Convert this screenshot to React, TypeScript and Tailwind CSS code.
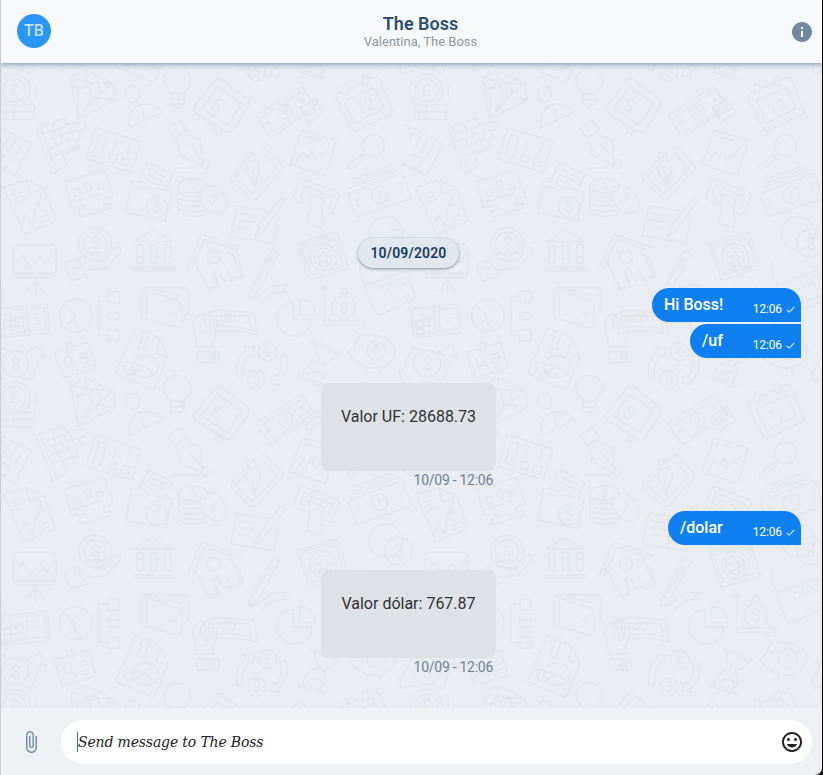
import React from "react";
import { MdAttachFile, MdCheck, MdInfo, MdInsertEmoticon } from "react-icons/md";

function Glyph({ x, y, size = 50, rotate = 0, children }: { x: number; y: number; size?: number; rotate?: number; children: string }) {
  return (
    <text x={x} y={y} fontSize={size} textAnchor="middle" dominantBaseline="central" transform={`rotate(${rotate} ${x} ${y})`} fill="#e3e7ec" stroke="none" fontFamily="Roboto, sans-serif">
      {children}
    </text>
  );
}

// One repeat of the finance doodles, split in four quadrants drawn at 3x.
function Doodles() {
  return (
    <g id="doodles" fill="none" stroke="#e3e7eb" strokeWidth="5" strokeLinejoin="round" strokeLinecap="round">
      <g transform="translate(0 65) scale(.3333)">
        <circle cx="40" cy="76" r="48" /><circle cx="40" cy="76" r="35" /><Glyph x={40} y={76}>£</Glyph>
        <path d="M5 120H100V163H5ZM18 120V163M40 120V163M5 140H100M106 60V98" />
        <path d="M210 38L255 15L338 58L344 105L230 163ZM210 38L255 48L338 58M255 15V48L232 75L230 163L275 95L344 105M210 55L232 75L290 50L300 85L330 60M275 95L255 48M300 85L250 140" />
        <ellipse cx="396" cy="87" rx="21" ry="25" transform="rotate(-15 396 87)" />
        <path d="M383 190Q380 130 420 118Q460 112 487 140ZM420 118L432 165" />
        <path d="M514 85Q490 70 490 45A40 36 0 0 1 570 45Q570 70 545 85ZM511 88H550V118H511ZM511 103H550M518 118L530 130L542 118" />
        <path d="M106 190L190 160L198 180L250 168L257 187L233 200L245 220L225 228L233 250L185 270L198 300L155 327ZM118 186L168 320M135 205L190 185M140 225L250 190M148 248L238 214M158 272L228 246M155 180L165 205M175 198L185 225M160 225L170 248M210 190L218 210M200 220L208 240M180 255L187 275" />
        <path d="M285 187L420 230L392 322L256 281ZM295 208L318 214L300 278L276 270ZM348 222L338 252M389 234L379 264M328 267L350 272L344 294L322 288ZM366 279L388 284L382 305L360 298Z" />
        <path d="M502 190L538 165L560 195L522 220ZM524 220L540 255L535 268L605 303L600 225L588 220L560 208M566 238L610 290M518 309H595" /><circle cx="615" cy="297" r="13" />
        <path d="M-20 180L90 235L43 333L-30 296M0 205L-10 225M25 215L5 250M45 225L25 260M62 240L42 275M0 268L28 282L15 310L-10 300" />
        <path d="M8 367L75 345L130 370L165 468L70 507ZM75 345L88 388L130 370M32 390L60 380M36 402L65 391M42 414L72 402M65 475L75 448L95 485L108 415L115 425L120 385M115 460L140 450M120 473L145 462" />
        <path d="M192 350L310 315L338 393L308 405L311 420L330 415L333 428L240 457L234 440L255 432L250 422L212 430ZM220 375L235 370L240 390L225 395ZM252 352L266 348L273 375L259 380ZM290 360L303 356L307 370L294 374ZM205 415L300 385" />
        <path d="M392 348L376 443L495 468L515 380L440 365L430 352ZM400 365L435 372M412 350L443 292L518 330L494 375M448 314L495 337M441 328L488 351M434 342L478 363" /><circle cx="469" cy="427" r="31" /><Glyph x={469} y={427} size={48}>$</Glyph>
        <ellipse cx="577" cy="363" rx="44" ry="22" /><Glyph x={577} y={363} size={32}>$</Glyph>
        <path d="M533 363V440Q550 458 590 453Q605 455 620 443M533 382Q560 400 600 391M533 398Q560 415 605 407M533 414Q560 430 610 421M533 430Q560 446 615 436" />
        <ellipse cx="638" cy="403" rx="48" ry="34" transform="rotate(50 638 403)" /><Glyph x={638} y={403} size={38} rotate={30}>$</Glyph>
        <circle cx="283" cy="537" r="49" /><circle cx="283" cy="537" r="35" /><Glyph x={283} y={537}>$</Glyph>
        <path d="M50 539H150Q165 541 165 556V620Q165 637 150 637H50Q37 637 37 620V556Q37 540 50 539ZM37 625H165M48 590L65 570L88 610L118 575L137 598L158 565M104 640V690M104 650L75 680M104 650L130 680" />
        <path d="M190 598L230 578L258 635L210 648ZM240 573L270 563H325L350 545Q365 550 360 562L315 610L258 615M280 590H310L330 570" /><circle cx="227" cy="600" r="10" />
        <path d="M400 530L458 496L516 530ZM408 540H426V595H408ZM450 540H468V595H450ZM492 540H510V595H492ZM397 607H522V616H397Z" />
        <path d="M560 610L603 508L725 550M575 610L612 522L710 557M592 610L628 677L655 665L640 615M680 615L695 650L730 635L715 585L680 560" /><circle cx="640" cy="575" r="20" />
      </g>
      <g transform="translate(205 65) scale(.3333)">
        <path d="M30 43Q40 36 50 45L128 103Q135 112 130 122L85 195Q75 205 63 200L-30 145Q-40 135 -34 125L25 50ZM35 65L108 115L66 180L-10 130ZM25 198L38 185L50 200L40 210Z" /><Glyph x={35} y={120} size={55} rotate={35}>S</Glyph>
        <path d="M152 152L290 65L332 128L195 218ZM165 160L285 82M205 200L315 130M285 130L330 102L355 142L310 175ZM292 143L340 115M300 157L348 128" /><circle cx="241" cy="141" r="22" /><Glyph x={241} y={141} size={34}>$</Glyph><circle cx="190" cy="173" r="5" /><circle cx="291" cy="107" r="5" />
        <path d="M393 100Q390 90 402 85L505 37Q520 35 525 45L562 135Q562 145 553 149L455 197Q445 200 438 190ZM418 108L508 68L537 130L447 175Z" /><ellipse cx="420" cy="73" rx="9" ry="16" fill="#e9edf2" /><ellipse cx="482" cy="47" rx="9" ry="16" fill="#e9edf2" /><Glyph x={480} y={124} size={48} rotate={-22}>12</Glyph>
        <path d="M290 195L394 228L360 333L254 298ZM276 288L295 260L305 282L320 255L328 288L370 250M300 213L350 227" />
        <circle cx="505" cy="241" r="33" /><path d="M478 267L465 278M470 270L426 303Q425 313 435 313L478 282Z" />
        <path d="M165 247Q175 244 183 252L230 300Q235 312 228 318L155 400Q145 406 133 398L80 350Q73 340 80 330L148 260M120 265L145 262L152 285L130 290ZM130 290Q115 315 130 330L148 370L155 335Q175 315 152 285M142 320L147 365M90 335L120 305M95 345L142 388L215 312L175 267" />
        <path d="M282 345Q290 340 300 345L397 382Q404 390 400 398L378 450L350 440M282 345L266 393Q268 405 278 408L305 418M295 360L385 396L370 430M295 360L284 393L300 400M310 385L355 403Q345 450 355 465L348 490L303 472Q320 430 310 385Z" />
        <path d="M428 387L590 324L620 400L455 456ZM433 370L580 315M438 358L570 309M440 345L555 303" /><circle cx="523" cy="390" r="25" /><Glyph x={523} y={390} size={35}>1</Glyph><Glyph x={458} y={414} size={30}>$</Glyph><Glyph x={588} y={369} size={30}>$</Glyph>
        <path d="M95 422L185 438M218 460L206 535L75 513L95 422M225 403Q240 395 240 408L175 498L148 518L158 485ZM105 445L155 454M100 465L145 472M97 485L135 492M150 515L165 488" />
        <path d="M275 535L395 500L430 610L312 645ZM286 550L392 520L415 602L320 630ZM282 542L390 510" /><circle cx="354" cy="577" r="40" /><circle cx="354" cy="577" r="28" /><path d="M354 558L360 572L375 573L363 583L367 597L354 589L341 597L345 583L333 573L348 572Z" />
        <path d="M190 572L205 556L222 568L210 587ZM185 580L205 592L155 690L128 702L138 670ZM138 670L155 690M150 660L195 585M130 703L155 698Q200 650 250 662Q225 670 240 682Q200 675 170 715" />
        <circle cx="543" cy="505" r="50" /><circle cx="580" cy="535" r="42" /><Glyph x={580} y={535} size={55}>$</Glyph>
      </g>
      <g transform="translate(0 255) scale(.3333)">
        <path d="M8 160L130 147Q138 146 139 155L145 225Q145 234 137 235L8 247Q0 247 -1 239L-7 170Q-7 161 8 160ZM77 163L130 157L136 222L82 228ZM28 166L64 162L66 184L30 188ZM8 197L66 190L72 232L10 238ZM8 217L70 211M29 195L32 236M48 192L52 233" /><Glyph x={106} y={192} size={24} rotate={85}>101</Glyph>
        <circle cx="225" cy="182" r="49" /><path d="M190 150L225 185L205 205M218 190L240 230" /><Glyph x={235} y={160} size={22}>3</Glyph>
        <path d="M322 109H356V143H322ZM322 172H354V194H322ZM322 224H355V257H322ZM322 125H295V240H322" />
        <path d="M433 97H550Q564 98 564 113V168Q563 181 552 182M433 97Q423 100 423 115V180Q424 188 436 190L530 218Q543 218 544 203V155Q542 142 530 136L433 103M438 110V182M460 103L540 122M505 173L530 178" />
        <path d="M405 218L480 250L502 308L460 405L344 356ZM480 250L466 295L502 308M415 245L430 230Q450 225 445 240L432 280Q420 290 412 278L425 245" /><ellipse cx="433" cy="335" rx="40" ry="33" /><path d="M433 335L470 360M433 335L370 320Q365 340 385 360ZM433 335L395 350" />
        <path d="M160 292L263 262L286 339L183 370ZM196 268L212 260L220 285L204 290ZM185 360Q185 332 205 332Q225 328 230 345M235 300L258 293M238 312L262 305M242 326L265 319M245 338L270 330" /><ellipse cx="202" cy="317" rx="12" ry="14" />
        <circle cx="43" cy="326" r="40" /><Glyph x={43} y={326} size={55}>$</Glyph><path d="M-5 280L25 285M75 293L117 270L134 313L120 302L90 378L60 366M75 293L92 303" />
        <path d="M590 290H645V323H590ZM590 275L577 215Q575 180 615 175L645 168M590 275H645" /><circle cx="630" cy="307" r="8" /><ellipse cx="620" cy="205" rx="20" ry="30" /><path d="M610 185L620 230M625 180L630 225" />
      </g>
      <g transform="translate(205 255) scale(.3333)">
        <path d="M0 178Q20 160 60 167L145 173L155 240Q100 220 30 230L20 275H-25M25 183L130 182L138 225Q90 210 40 215M0 178V195L38 195L30 230M-22 290H40V322H-22" /><circle cx="20" cy="306" r="7" /><ellipse cx="68" cy="190" rx="22" ry="12" /><Glyph x={68} y={190} size={22}>$</Glyph>
        <path d="M264 140V193H320A53 52 0 1 1 264 140ZM283 132Q325 135 333 180H283Z" />
        <path d="M358 210V98M348 105L358 93L369 105M358 210H478M470 200L482 210L470 220M405 115L416 97L428 115ZM385 175L370 197H462L447 175" /><circle cx="416" cy="158" r="35" /><Glyph x={416} y={158} size={52}>$</Glyph>
        <path d="M480 105Q475 95 488 88L590 50Q605 48 610 60L630 118Q632 130 620 136L525 180Q512 182 507 170ZM465 20Q460 60 480 88M570 138L585 131M597 127L615 118" /><Glyph x={568} y={89} size={33} rotate={-22}>CARD</Glyph>
        <path d="M470 240Q510 235 540 250Q572 265 570 290Q565 325 530 337Q490 345 465 325L445 315L428 292L448 275Q450 250 470 240ZM570 290L580 285M483 340V355M525 340V355M465 240L450 225" /><circle cx="513" cy="287" r="28" /><Glyph x={513} y={287} size={40}>$</Glyph><circle cx="467" cy="270" r="3" />
        <path d="M320 255L406 290L400 297L316 264ZM330 265Q325 290 340 305L345 315Q300 325 292 362M395 295Q385 320 352 325L360 345Q365 370 345 380M276 370L360 398M280 363L363 390M305 360Q330 340 352 360L345 380" />
        <circle cx="187" cy="290" r="28" /><Glyph x={187} y={290} size={46}>€</Glyph><circle cx="154" cy="374" r="27" /><Glyph x={154} y={374} size={44}>$</Glyph>
        <path d="M95 370Q85 310 122 285L115 275L148 278L140 305L132 298Q105 320 112 365ZM240 295Q260 350 218 380L222 390L193 384L205 357L212 365Q235 335 225 300Z" />
        <path d="M-35 10L5 100L35 92L20 50M35 40L55 78L108 62L70 -30" />
        <path d="M622 170Q625 155 640 157M622 170L625 240Q630 250 645 245M632 180H645M632 200H645M632 220H645M590 350L625 275L645 285M582 345L590 378L625 370" />
      </g>
    </g>
  );
}

function Wallpaper() {
  return (
    <svg className="absolute inset-0 h-full w-full" viewBox="0 63 823 645" preserveAspectRatio="none" aria-hidden="true">
      <defs><Doodles /></defs>
      {[-307.5, 0, 307.5, 615].map((y) => [-413, 0, 413].map((x) => <use key={`${x}:${y}`} href="#doodles" x={x} y={y} />))}
    </svg>
  );
}

function Sent({ text, className }: { text: string; className: string }) {
  return (
    <div className={`flex h-[34px] items-center justify-between self-end rounded-l-[17px] bg-[#0f80f2] pl-3 pr-[5px] text-white ${className}`}>
      <span className="text-[16px] leading-5 font-medium">{text}</span>
      <span className="mt-[7px] flex items-center gap-[3px] text-[12px] leading-3 tracking-[-0.01em]">
        12:06 <MdCheck size={11} className="mt-[2px]" />
      </span>
    </div>
  );
}

function Card({ text, className }: { text: string; className: string }) {
  return (
    <div className={`ml-[320px] w-[175px] ${className}`}>
      <div className="h-[88px] rounded-lg bg-[#dee1e6] pt-[22px] text-center text-[16px] leading-6 whitespace-nowrap text-[#303236]">{text}</div>
      <div className="pr-[3px] text-right text-[14px] leading-[19px] tracking-[-0.27px] text-[#6f8293]">10/09 - 12:06</div>
    </div>
  );
}

export default function App() {
  return (
    <div className="h-[775px] w-[823px] overflow-hidden bg-black font-['Roboto',sans-serif]">
      <div className="flex h-full w-[822px] flex-col overflow-hidden rounded-br-[7px] border-l border-[#cbccd0] bg-[#eef2f5]">
        <header className="z-10 flex h-[63px] shrink-0 items-center justify-between bg-[#f8f9fb] pr-2 pl-4 shadow-[0_1px_5px_1px_#91a3b7]">
          <div className="mb-[1px] flex size-[34px] items-center justify-center rounded-full bg-[#2997f6] pb-px text-[16px] font-medium text-[#c2e1fc]">TB</div>
          <div className="mt-px flex flex-col items-center">
            <h1 className="text-[18px] leading-[18px] font-semibold text-[#2b4e73]">The Boss</h1>
            <p className="mt-px text-[13px] leading-4 text-[#92989c]">Valentina, The Boss</p>
          </div>
          <MdInfo size={24} color="#7289a1" className="mt-[1px]" />
        </header>
        <main className="relative h-[645px] shrink-0 bg-[#e9edf2]">
          <Wallpaper />
          <div className="relative flex h-full flex-col pt-[175px] pr-[21px]">
            <div className="ml-[357px] flex h-[30px] w-[101px] items-center justify-center rounded-full bg-[#e2e7ee] text-[14px] font-semibold tracking-[0.01em] text-[#173c64] shadow-[0_1px_3px_#00000066]">10/09/2020</div>
            <Sent text="Hi Boss!" className="mt-5 w-[149px] rounded-tr-[17px]" />
            <Sent text="/uf" className="mt-[2px] w-[111px]" />
            <Card text="Valor UF: 28688.73" className="mt-[25px]" />
            <Sent text="/dolar" className="mt-[21px] w-[133px] rounded-tr-[17px]" />
            <Card text="Valor dólar: 767.87" className="mt-[25px]" />
          </div>
        </main>
        <footer className="flex h-[67px] shrink-0 items-center pr-[10px] pl-[18px]">
          <MdAttachFile size={24} color="#7690aa" />
          <div className="ml-[18px] flex h-11 flex-1 items-center rounded-full bg-white pr-2 pl-4">
            <span className="h-5 w-px bg-[#1976d2]" />
            <span className="mt-[2px] flex-1 font-['DejaVu_Serif',serif] text-[14px] tracking-[-0.15px] text-[#1c1c1c] italic">Send message to The Boss</span>
            <MdInsertEmoticon size={24} color="#202124" />
          </div>
        </footer>
      </div>
    </div>
  );
}
